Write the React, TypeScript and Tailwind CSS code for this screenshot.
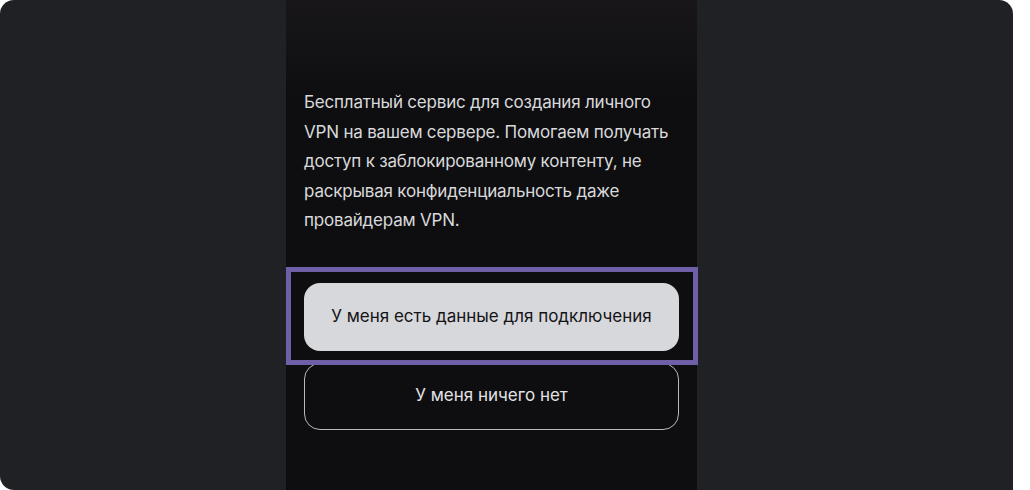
export default function App() {
  return (
    <div className="w-[1030px] h-[490px] bg-white flex" style={{ fontFamily: 'Inter, "Noto Sans", sans-serif' }}>
      <div className="w-[1013px] h-full bg-[#202125] rounded-tl-[14px] rounded-tr-[14px] rounded-bl-[14px] pl-[286px] overflow-hidden">
        {/* Phone panel */}
        <div className="w-[411px] h-full bg-gradient-to-b from-[#181618] via-[#0e0e10] via-[20%] to-[#0e0e10] px-[18px] pt-[88px] flex flex-col">
          <p className="text-[17px] leading-[29.5px] text-[#d9d9db] tracking-[-0.2px] pr-[2px]">
            Бесплатный сервис для создания личного VPN на вашем сервере. Помогаем получать доступ к заблокированному контенту, не раскрывая конфиденциальность даже провайдерам VPN.
          </p>

          <div className="mt-[47px] flex flex-col gap-3">
            <div className="relative">
              <button className="w-full h-[68px] rounded-[16px] bg-[#d7d8dc] text-[#141416] text-[17px]">
                У меня есть данные для подключения
              </button>
              {/* Highlight frame */}
              <div className="absolute -left-[18px] -top-[16px] -right-[19px] -bottom-[14px] border-[5px] border-[#6f5fa8] pointer-events-none z-10" />
            </div>
            <button className="w-full h-[67px] rounded-[16px] border border-[#b9b9bc] text-[#e2e2e4] text-[17px]">
              У меня ничего нет
            </button>
          </div>
        </div>
      </div>
    </div>
  )
}
